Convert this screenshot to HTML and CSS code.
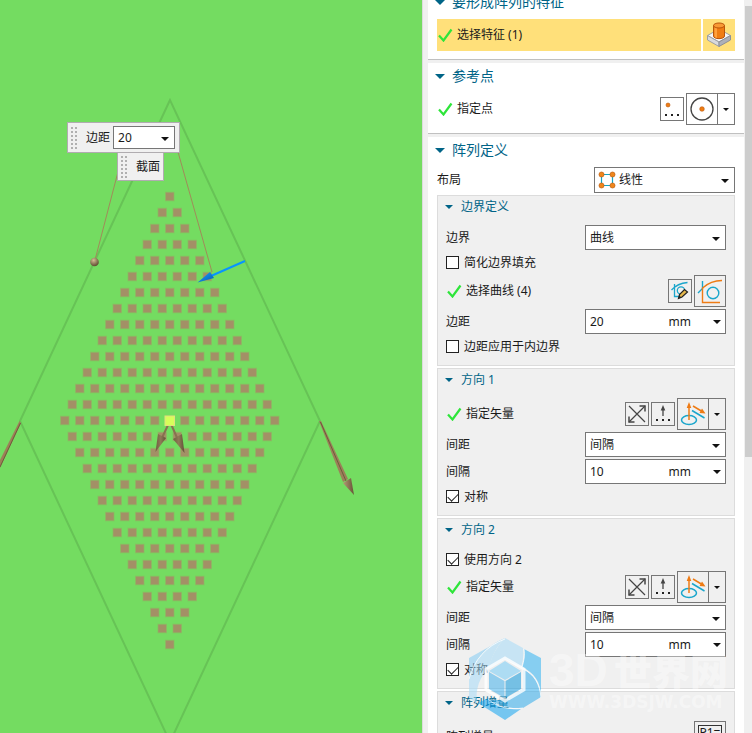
FILE: index.html
```html
<!DOCTYPE html>
<html lang="zh-CN">
<head>
<meta charset="utf-8">
<title>阵列特征</title>
<link rel="stylesheet" href="styles.css">
</head>
<body>
<svg class="defs" aria-hidden="true">
  <symbol id="tick" viewBox="0 0 16 14"><path d="M2 7.500L6.500 12.500L14.500 1.500" fill="none" stroke="#2ee53a" stroke-width="2.200"/></symbol>
  <symbol id="reverse" viewBox="0 0 22 22"><g fill="none" stroke="#444" stroke-width="1.200"><path d="M3 3L19 19M3 19L19 3"/><path d="M13.500 3H19V8.500M3 13.500V19H8.500" stroke-width="1.500"/></g></symbol>
  <symbol id="vecdlg" viewBox="0 0 22 22"><path d="M11 5V13" stroke="#444" stroke-width="1.300"/><path d="M11 2L13.300 7.500H8.700Z" fill="#444"/><path d="M4 16h2v2h-2zM10 16h2v2h-2zM16 16h2v2h-2z" fill="#222"/></symbol>
  <symbol id="vector" viewBox="0 0 30 30"><ellipse cx="11" cy="21" rx="7.500" ry="4.500" fill="none" stroke="#1aa6cc" stroke-width="1.500"/><path d="M11 21V6M15 7L25 13" stroke="#ee7b14" stroke-width="1.500"/><path d="M11 3L13.300 9H8.700ZM27.500 14.500L21.500 14L24 9.500Z" fill="#ee7b14"/><path d="M14 11.500L26.500 19" stroke="#1aa6cc" stroke-width="1.500"/></symbol>
</svg>

<main class="app">
  <section class="viewport" aria-label="图形窗口">
    <svg class="scene" width="422" height="733" viewBox="0 0 422 733" aria-hidden="true">
      <defs>
        <linearGradient id="bronze"><stop offset="0" stop-color="#b49a76"/><stop offset="1" stop-color="#665236"/></linearGradient>
        <linearGradient id="bronze-small"><stop offset="0" stop-color="#6e5d40"/><stop offset=".5" stop-color="#8f7a56"/><stop offset="1" stop-color="#5f5036"/></linearGradient>
        <linearGradient id="azure" x1="0" y1="0" x2="1" y2="1"><stop offset="0" stop-color="#20a4ff"/><stop offset="1" stop-color="#0058b4"/></linearGradient>
        <radialGradient id="ball" cx=".4" cy=".3" r=".7"><stop offset="0" stop-color="#d5bd94"/><stop offset="1" stop-color="#5d4a30"/></radialGradient>
      </defs>
      <path d="M170 100L20 421L170 742L320 421Z" fill="none" stroke="#67c356" stroke-width="2"/>
      <g id="instances"></g>
      <path d="M119 168L95 260M178 152L212 272" fill="none" stroke="#a08b5a"/>
      <circle cx="94.500" cy="262" r="4.300" fill="url(#ball)"/>
      <path d="M245 261L211 276" stroke="#0894ff" stroke-width="2"/>
      <path d="M197.500 282.500L210 272L214 278Z" fill="url(#azure)"/>
      <path d="M19.500 421L21 423L0 468V460Z" fill="#9d8058"/>
      <path d="M20.500 423L0 467" stroke="#705c3c" stroke-width="1"/>
      <path d="M319 421H321L348 479L343 482Z" fill="#9c8059"/>
      <path d="M320.500 422L346 481" stroke="#705c3c"/>
      <path d="M343 483L351 478L354 495Z" fill="url(#bronze)"/>
      <path d="M168.500 424L161 440M171 424L178 440" stroke="#887250" stroke-width="2"/>
      <path d="M155.500 452L158 434L166 438Z" fill="url(#bronze-small)"/>
      <path d="M184.500 453L173 439L182 434Z" fill="url(#bronze-small)"/>
      <rect x="165" y="416" width="9.500" height="9.500" fill="#d6ff5a" stroke="#e3e07d" stroke-width="1"/>
    </svg>
    <div class="floatbar floatbar-margin">
      <span class="grip"></span>
      <label for="float-margin">边距</label>
      <span class="select float-select"><select id="float-margin"><option>20</option></select></span>
    </div>
    <div class="floatbar floatbar-section">
      <span class="grip"></span>
      <span>截面</span>
    </div>
  </section>

  <aside class="dialog">
    <div class="content">
      <section class="section">
        <h2 class="heading">要形成阵列的特征</h2>
        <div class="row pick active">
          <span class="pick-label"><svg class="tick"><use href="#tick"/></svg>选择特征 (1)</span>
          <button class="tool large" aria-label="选择特征">
            <svg width="28" height="28" viewBox="0 0 28 28"><path d="M2.500 14.500L14 8L25.500 14.500L14 21Z" fill="#f5f6f8" stroke="#9da0a5"/><path d="M2.500 14.500V19L14 25.500V21Z" fill="#d8dade" stroke="#9da0a5"/><path d="M25.500 14.500V19L14 25.500V21Z" fill="#adb0b8" stroke="#8d9098"/><path d="M8.500 4.500V15C8.500 18.500 19.500 18.500 19.500 15V4.500Z" fill="#ef7d13" stroke="#b9550a"/><path d="M9.500 6V15C9.500 16 11 17 12 17V6Z" fill="#ffa13d"/><ellipse cx="14" cy="4.500" rx="5.500" ry="2.500" fill="#f89a35" stroke="#b9550a"/></svg>
          </button>
        </div>
      </section>

      <section class="section">
        <h2 class="heading">参考点</h2>
        <div class="row pick">
          <span class="pick-label"><svg class="tick"><use href="#tick"/></svg>指定点</span>
          <button class="tool" aria-label="点对话框"><svg width="22" height="22" viewBox="0 0 22 22"><circle cx="7" cy="7" r="2" fill="#ef7d13" stroke="#b9550a" stroke-width=".6"/><path d="M4 16h2v2h-2zM10 16h2v2h-2zM16 16h2v2h-2z" fill="#222"/></svg></button>
          <span class="split">
            <button class="split-main" aria-label="圆心"><svg width="30" height="30" viewBox="0 0 30 30"><circle cx="15" cy="15" r="11" fill="none" stroke="#444" stroke-width="1.300"/><circle cx="15" cy="15" r="2.300" fill="#ef7d13" stroke="#b9550a" stroke-width=".6"/></svg></button>
            <button class="split-more" aria-label="更多点类型"></button>
          </span>
        </div>
      </section>

      <section class="section">
        <h2 class="heading">阵列定义</h2>
        <div class="row field layout-field">
          <label for="layout">布局</label>
          <span class="select with-icon">
            <svg class="select-icon" width="18" height="18" viewBox="0 0 18 18"><path d="M3.500 3.500H14.500V14.500H3.500Z" fill="none" stroke="#13a5c7" stroke-width="1.200"/><g fill="#ef861c" stroke="#bd5d10" stroke-width=".7"><circle cx="3.500" cy="3.500" r="2.500"/><circle cx="14.500" cy="3.500" r="2.500"/><circle cx="3.500" cy="14.500" r="2.500"/><circle cx="14.500" cy="14.500" r="2.500"/></g></svg>
            <select id="layout"><option>线性</option></select>
          </span>
        </div>

        <section class="group">
          <h3 class="heading">边界定义</h3>
          <div class="row field"><label for="boundary">边界</label><span class="select"><select id="boundary"><option>曲线</option></select></span></div>
          <label class="row check"><input type="checkbox">简化边界填充</label>
          <div class="row pick">
            <span class="pick-label"><svg class="tick"><use href="#tick"/></svg>选择曲线 (4)</span>
            <button class="tool" aria-label="绘制截面"><svg width="22" height="22" viewBox="0 0 22 22"><g fill="none" stroke="#1aa6cc" stroke-width="1.300"><path d="M5.500 4V16.500H12M2.500 10C7 5 12 3 18.500 2.500"/><circle cx="12" cy="10.500" r="3.700"/></g><path d="M9.500 18.500L10.500 14.500L15.500 9.500L18.500 12L13 17Z" fill="#e5b84c" stroke="#222" stroke-width="1.200"/><path d="M9.500 18.500L10.200 15.500L12.500 17.500Z" fill="#222"/></svg></button>
            <button class="tool large" aria-label="曲线"><svg width="30" height="30" viewBox="0 0 30 30"><g fill="none" stroke-width="1.400"><path d="M7.500 5V12M3 17L8 12" stroke="#1aa6cc"/><circle cx="18" cy="17" r="5.800" stroke="#1aa6cc"/><path d="M25 26.500H7.500V12C12 8 19 4.500 27 4.500" stroke="#ee7b14"/></g></svg></button>
          </div>
          <div class="row field"><label for="margin">边距</label><span class="combo"><input id="margin" type="text" value="20"><span>mm</span><button aria-label="边距选项"></button></span></div>
          <label class="row check"><input type="checkbox">边距应用于内边界</label>
        </section>

        <section class="group">
          <h3 class="heading">方向 1</h3>
          <div class="row pick">
            <span class="pick-label"><svg class="tick"><use href="#tick"/></svg>指定矢量</span>
            <button class="tool" aria-label="反向"><svg width="22" height="22"><use href="#reverse"/></svg></button>
            <button class="tool" aria-label="矢量对话框"><svg width="22" height="22"><use href="#vecdlg"/></svg></button>
            <span class="split"><button class="split-main" aria-label="自动判断的矢量"><svg width="30" height="30"><use href="#vector"/></svg></button><button class="split-more" aria-label="更多矢量类型"></button></span>
          </div>
          <div class="row field"><label for="spacing1">间距</label><span class="select"><select id="spacing1"><option>间隔</option></select></span></div>
          <div class="row field"><label for="pitch1">间隔</label><span class="combo"><input id="pitch1" type="text" value="10"><span>mm</span><button aria-label="间隔选项"></button></span></div>
          <label class="row check"><input type="checkbox" checked>对称</label>
        </section>

        <section class="group">
          <h3 class="heading">方向 2</h3>
          <label class="row check check-first"><input type="checkbox" checked>使用方向 2</label>
          <div class="row pick">
            <span class="pick-label"><svg class="tick"><use href="#tick"/></svg>指定矢量</span>
            <button class="tool" aria-label="反向"><svg width="22" height="22"><use href="#reverse"/></svg></button>
            <button class="tool" aria-label="矢量对话框"><svg width="22" height="22"><use href="#vecdlg"/></svg></button>
            <span class="split"><button class="split-main" aria-label="自动判断的矢量"><svg width="30" height="30"><use href="#vector"/></svg></button><button class="split-more" aria-label="更多矢量类型"></button></span>
          </div>
          <div class="row field"><label for="spacing2">间距</label><span class="select"><select id="spacing2"><option>间隔</option></select></span></div>
          <div class="row field"><label for="pitch2">间隔</label><span class="combo"><input id="pitch2" type="text" value="10"><span>mm</span><button aria-label="间隔选项"></button></span></div>
          <label class="row check"><input type="checkbox" checked>对称</label>
        </section>

        <section class="group">
          <h3 class="heading">阵列增量</h3>
          <div class="row pick">
            <span class="pick-label">阵列增量</span>
            <button class="tool large" aria-label="阵列增量"><span class="expr">P1=</span></button>
          </div>
        </section>
      </section>
    </div>
    <div class="scrollbar" aria-hidden="true"><div class="thumb"></div></div>
  </aside>

  <div class="watermark" aria-hidden="true">
    <svg width="72" height="82" viewBox="0 0 72 82">
      <g opacity=".55">
        <path d="M36 0L54 10C55 17 54 24 52 29L36 21L19 31C23 17 28 8 36 0Z" fill="#a6dcf8"/>
        <path d="M36 0L0 20V41C5 22 17 8 36 0Z" fill="#84cdf4"/>
        <path d="M36 0C17 8 5 22 0 41V60L8 65C6 51 11 38 20 30C23 17 28 8 36 0Z" fill="#a6dcf8"/>
        <path d="M55 11L72 20V60C72 43 65 35 53 29C55 23 56 17 55 11Z" fill="#30b4f2"/>
        <path d="M54 31C66 37 71 47 72 59L54 70C42 71 30 68 21 62L36 62L54 51Z" fill="#30acec"/>
        <path d="M9 65L19 60C29 69 41 72 52 71L36 82Z" fill="#12a4f0"/>
        <path d="M36 23L52 33L36 42L20 33Z" fill="#78ccf6"/>
        <path d="M20 34L35.500 43V60L20 51Z" fill="#45b2ec"/>
        <path d="M52 34L36.500 43V60L52 51Z" fill="#1299dc"/>
      </g>
      <path d="M36 20L55 31V52L36 63L17 52V31Z" fill="none" stroke="#fff" stroke-width="3" opacity=".8"/>
      <path d="M0 41C5 22 17 8 36 1M55 11C56 17 55 23 53 29M72 60C71 46 65 36 54 31M19 61C29 70 41 72 54 70" fill="none" stroke="#fff" opacity=".75"/>
    </svg>
    <div class="wm-text">
      <div class="wm-name"><span class="wm-latin">3D</span><span>世界网</span></div>
      <div class="wm-url">WWW.3DSJW.COM</div>
    </div>
  </div>
</main>
<script src="scene.js"></script>
</body>
</html>
```
FILE: styles.css
```css
* { box-sizing: border-box; }

body {
  margin: 0;
  font: 12px/18px "Noto Sans", "Noto Sans CJK SC", sans-serif;
  color: #1a1a1a;
  background: #74dc61;
}

button, input, select { font: inherit; color: inherit; margin: 0; padding: 0; border: 0; background: transparent; border-radius: 0; }
button { display: flex; align-items: center; justify-content: center; }
svg { display: block; flex: none; }
.defs { position: absolute; width: 0; height: 0; }

.app {
  position: relative;
  display: grid;
  grid-template-columns: 1fr 330px;
  height: 100vh;
  overflow: hidden;
}

/* Graphics window */
.viewport { position: relative; overflow: hidden; background: #74dc61; }
.instance { fill: #a39066; stroke: #8db863; stroke-opacity: .7; }

.floatbar {
  position: absolute;
  display: flex;
  align-items: center;
  background: #f0f0f0;
  border: 1px solid #b0acb0;
}
.floatbar-margin { left: 67px; top: 122px; height: 31px; padding: 0 4px 0 2px; }
.floatbar-section { left: 117px; top: 152px; height: 29px; padding: 0 3px 0 2px; }
.grip {
  width: 7px;
  height: 24px;
  margin-right: 9px;
  background: radial-gradient(circle at 2px 2px, #b0b0b0 1px, transparent 1px) 0 0 / 4px 4px;
}
.float-select { margin-left: 3px; }

/* Dialog panel */
.dialog {
  display: flex;
  gap: 1px;
  background: #f0f0f0;
  border-left: 1px solid #dcdcdc;
  padding-left: 5px;
  min-height: 0;
  overflow: hidden;
}
.content { flex: 1; margin-top: -11px; min-width: 0; }
.scrollbar { width: 7px; padding-top: 6px; background: #f0f0f0; }
.thumb { height: 62%; background: #cdcdcd; }

.section {
  padding: 0 9px 8px;
  margin-bottom: 3px;
  background: #fff;
  border-bottom: 1px solid #c0c0c0;
}

.heading {
  display: flex;
  align-items: center;
  margin: 0;
  color: #006487;
  font-weight: 400;
}
.heading::before { content: ""; border: solid transparent; border-top-color: #006487; border-bottom: 0; }
.section > .heading { height: 26px; margin-bottom: 4px; font-size: 14px; }
.section > .heading::before { border-width: 5px 5px 0; margin: 0 7px 0 -2px; }

.group { margin-top: 2px; padding: 0 8px 6px; background: #f0f0f0; border: 1px solid #dcdcdc; }
.group > .heading { height: 22px; margin-bottom: 7px; font-size: 12px; }
.group > .heading::before { border-width: 4px 4px 0; margin: 0 8px 0 -1px; }

.row { display: flex; align-items: center; }
.field { height: 25px; }
.layout-field { height: 26px; }
.field > label { flex: 1; }
.row + .field { margin-top: 2px; }
.check { height: 25px; gap: 5px; }
.check-first { height: 23px; }
.pick { height: 32px; gap: 2px; }
.pick-label { flex: 1; display: flex; align-items: center; gap: 4px; height: 100%; }
.tick { width: 16px; height: 14px; }
.active .pick-label, .active .tool { background: #ffe07a; border-color: #ffe07a; }

.check input {
  appearance: none;
  display: grid;
  place-items: center;
  width: 13px;
  height: 13px;
  border: 1px solid #222;
  background: #fff;
}
.check input:checked::before {
  content: "";
  width: 9px;
  height: 5px;
  border: solid #222;
  border-width: 0 0 1px 1px;
  transform: translateY(-1px) rotate(-45deg);
}

.tool { width: 24px; height: 24px; border: 1px solid #767676; }
.large { width: 32px; height: 32px; }
.split { display: flex; width: 49px; height: 32px; border: 1px solid #767676; }
.split-main { width: 31px; border-right: 1px solid #767676; }
.split-more { flex: 1; }
.split-more::after { content: ""; border: solid transparent; border-width: 3px 3px 0; border-top-color: #111; }
.expr { width: 24px; height: 24px; border: 1px solid #333; line-height: 14px; overflow: hidden; }

.select, .combo {
  position: relative;
  display: flex;
  align-items: center;
  flex: none;
  width: 141px;
  height: 100%;
  background: #fff;
  border: 1px solid #767676;
}
.select.float-select { width: 62px; height: 23px; }
.select select { appearance: none; width: 100%; height: 100%; padding-left: 4px; }
.select::after, .combo button::after {
  content: "";
  border: solid transparent;
  border-width: 4px 4px 0;
  border-top-color: #111;
}
.select::after { position: absolute; right: 5px; top: 50%; margin-top: -1px; pointer-events: none; }
.select-icon { margin-left: 3px; }
.with-icon select { padding-left: 3px; }
.combo input { flex: 1; min-width: 0; padding-left: 4px; }
.combo button { width: 16px; height: 100%; margin-left: 18px; }

/* Brand overlay */
.watermark {
  position: absolute;
  right: 24px;
  bottom: 13px;
  display: flex;
  gap: 8px;
  pointer-events: none;
  color: rgba(255, 255, 255, .4);
}
.wm-text { width: 179px; padding-top: 12px; }
.wm-name { display: flex; justify-content: space-between; font: 900 38px/40px "Noto Sans CJK SC", sans-serif; }
.wm-latin { font-family: "Liberation Sans", sans-serif; font-size: 46px; }
.wm-url { font: 700 17px/24px "DejaVu Sans", sans-serif; }
```
FILE: scene.js
```js
// Diamond of pattern instances: rows grow to 15 items, then shrink again.
const layer = document.getElementById("instances");
const center = { x: 169.75, y: 420.5 };
const pitch = { x: 15, y: 16 };
const half = 14;

for (let row = -half; row <= half; row++) {
  const count = half + 1 - Math.abs(row);
  for (let i = 0; i < count; i++) {
    const rect = document.createElementNS("http://www.w3.org/2000/svg", "rect");
    const x = center.x + (i - (count - 1) / 2) * pitch.x;
    const y = center.y + row * pitch.y;
    rect.setAttribute("class", "instance");
    rect.setAttribute("x", x - 4.25);
    rect.setAttribute("y", y - 4.25);
    rect.setAttribute("width", 8.5);
    rect.setAttribute("height", 8.5);
    layer.append(rect);
  }
}
```
